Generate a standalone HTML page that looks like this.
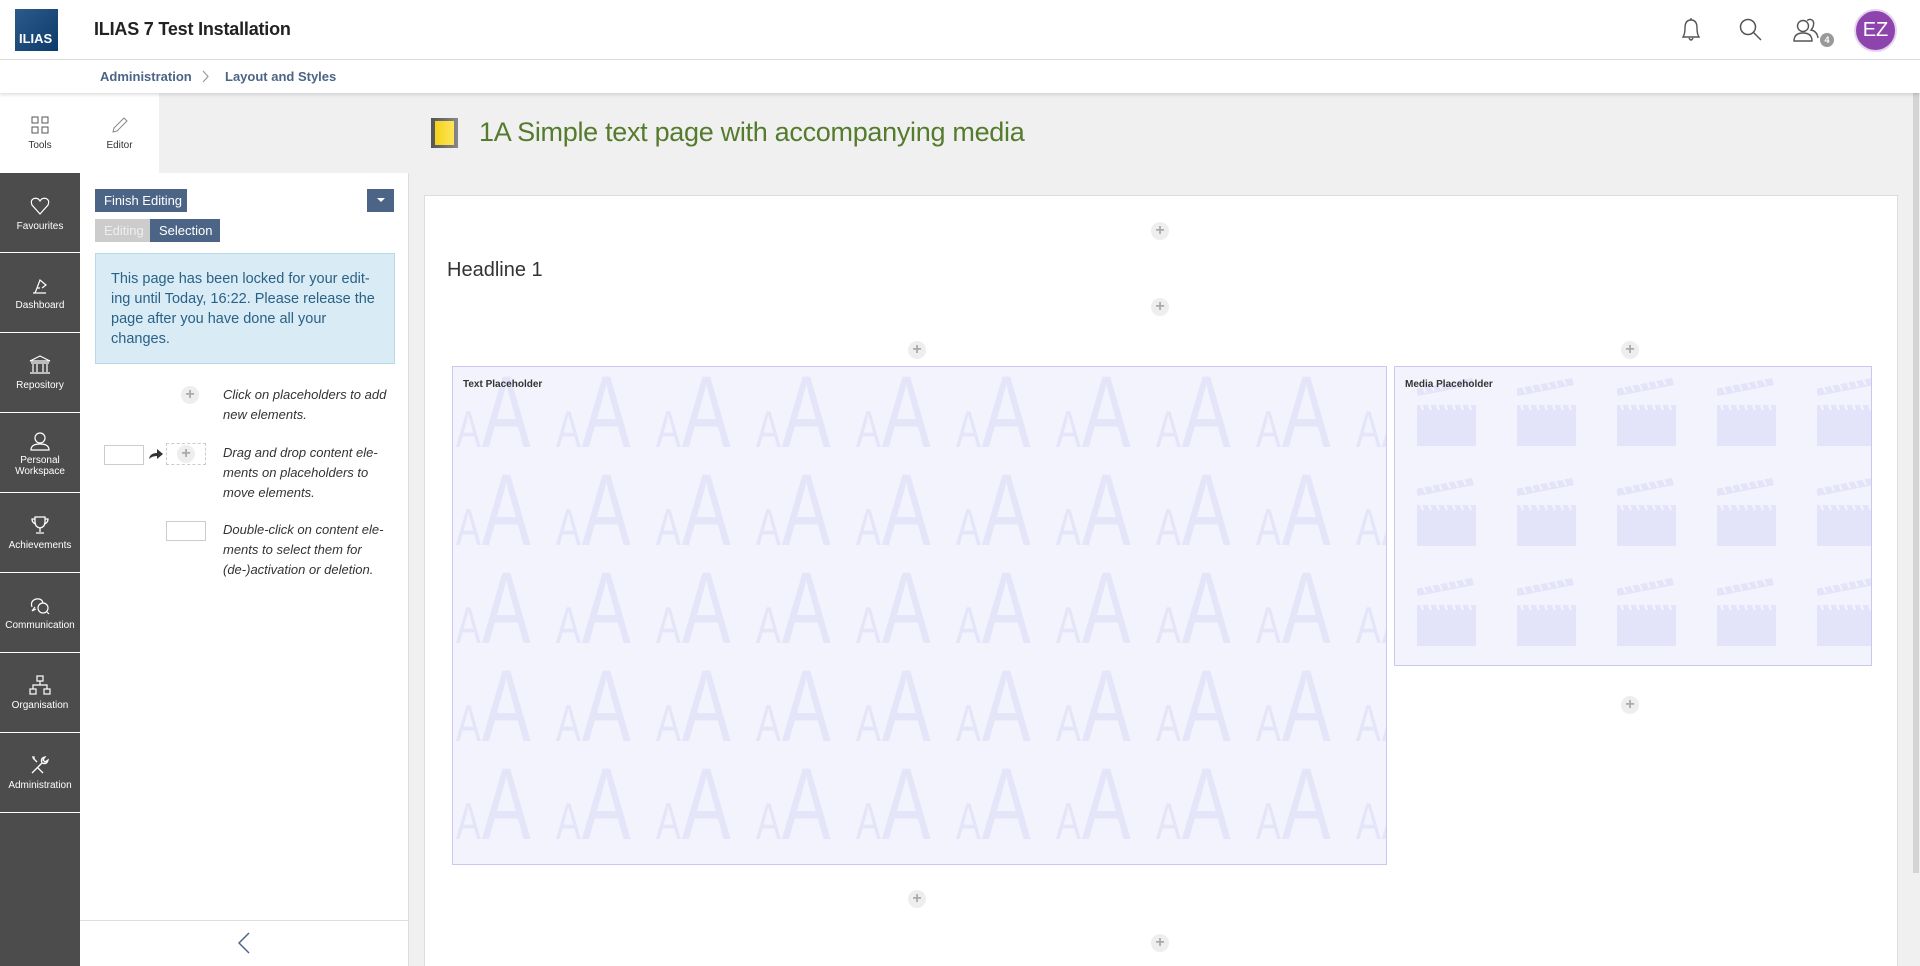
<!DOCTYPE html>
<html style="overflow:hidden;height:966px"><head><meta charset="utf-8"><style>
*{box-sizing:border-box;margin:0;padding:0}
body{width:1920px;height:966px;overflow:hidden;font-family:"Liberation Sans",sans-serif;background:#fff;position:relative;color:#161616}
.abs{position:absolute}
#hdr{left:0;top:0;width:1920px;height:60px;background:#fff;border-bottom:1px solid #ddd}
#bc{left:0;top:60px;width:1920px;height:33px;background:#fff;box-shadow:0 2px 3px rgba(0,0,0,.12);z-index:2}
#bc span{position:absolute;top:9px;font-size:13px;color:#4c6586;font-weight:bold}
#slate{left:0;top:93px;width:80px;height:873px;background:#4c4c4c}
.si{position:absolute;left:0;width:80px;height:80px;border-bottom:1px solid #fff;color:#fff;font-size:10px;text-align:center}
.si svg{display:block;margin:0 auto}
#panel{left:80px;top:93px;width:329px;height:873px;background:#fff;border-right:1px solid #ddd}
#main{left:409px;top:93px;width:1503px;height:873px;background:#f0f0f0;overflow:hidden}
.plus{position:absolute;width:18px;height:18px;border-radius:9px;background:#eee;color:#aaa;font-weight:bold;font-size:16px;line-height:18px;text-align:center}
.help{position:absolute;left:143px;font-style:italic;font-size:13px;line-height:20px;color:#333;width:170px}
</style></head><body>
<div id="hdr" class="abs">
  <div class="abs" style="left:15px;top:9px;width:43px;height:42px;background:linear-gradient(135deg,#2c5a8a,#0d3b6a);color:#fff;font-weight:bold;font-size:13px;padding:22px 0 0 4px">ILIAS</div>
  <div class="abs" style="left:94px;top:19px;font-size:18px;color:#222;font-weight:bold;letter-spacing:-.2px">ILIAS 7 Test Installation</div>
  <svg class="abs" style="left:1679px;top:16px" width="24" height="28" viewBox="0 0 24 28" fill="none" stroke="#555" stroke-width="1.4"><path d="M4 21 Q6 18 6 12 Q6 4 12 4 Q18 4 18 12 Q18 18 20 21 Z"/><path d="M10 22 Q12 26 14 22"/><path d="M12 2v2"/></svg>
  <svg class="abs" style="left:1738px;top:16px" width="26" height="28" viewBox="0 0 26 28" fill="none" stroke="#555" stroke-width="1.5"><circle cx="10" cy="11" r="7.5"/><path d="M15.5 16.5 L23 24"/></svg>
  <svg class="abs" style="left:1792px;top:16px" width="30" height="28" viewBox="0 0 30 28" fill="none" stroke="#555" stroke-width="1.4"><circle cx="11" cy="10" r="5.5"/><path d="M2 25 Q2 17 11 17 Q20 17 20 25 Z"/><path d="M15 4.5 Q17 3 19 3.5 Q23 5 21 11 Q20 13 19 14 Q25 15 26 22"/></svg>
  <div class="abs" style="left:1820px;top:33px;width:14px;height:14px;border-radius:7px;background:#999;color:#fff;font-size:9px;font-weight:bold;text-align:center;line-height:14px">4</div>
  <div class="abs" style="left:1854px;top:9px;width:43px;height:43px;border-radius:22px;background:#8e44ad;border:2px solid #e6d2ee;color:#fff;font-size:20px;text-align:center;line-height:39px">EZ</div>
</div>
<div id="bc" class="abs">
  <span style="left:100px">Administration</span>
  <svg class="abs" style="left:202px;top:10px" width="8" height="13"><path d="M1 1l5 5.5-5 5.5" fill="none" stroke="#999" stroke-width="1.2"/></svg>
  <span style="left:225px">Layout and Styles</span>
</div>
<div id="slate" class="abs">
  <div class="si" style="top:0;background:#fff;color:#333;height:80px;border:none"><svg style="margin-top:23px" width="18" height="18" fill="none" stroke="#555"><rect x="1" y="1" width="6" height="6"/><rect x="11" y="1" width="6" height="6"/><rect x="1" y="11" width="6" height="6"/><rect x="11" y="11" width="6" height="6"/></svg><div style="margin-top:6px">Tools</div></div>
  <div class="si" style="top:80px"><svg style="margin-top:24px" width="20" height="18" fill="none" stroke="#fff" stroke-width="1.2"><path d="M10 17 L2 8 Q0 3 4 1.5 Q8 0.5 10 4 Q12 0.5 16 1.5 Q20 3 18 8 Z"/></svg><div style="margin-top:6px">Favourites</div></div>
  <div class="si" style="top:160px"><svg style="margin-top:22px" width="20" height="20" fill="none" stroke="#fff" stroke-width="1.2"><path d="M3 18h13M5 18l2-5 3 0M7 13l3-8 6 5-4 3"/></svg><div style="margin-top:5px">Dashboard</div></div>
  <div class="si" style="top:240px"><svg style="margin-top:22px" width="22" height="20" fill="none" stroke="#fff" stroke-width="1.2"><path d="M1 6L11 1l10 5zM2 8h18M4 9v8M8 9v8M14 9v8M18 9v8M1 18h20"/></svg><div style="margin-top:5px">Repository</div></div>
  <div class="si" style="top:320px"><svg style="margin-top:18px" width="20" height="20" fill="none" stroke="#fff" stroke-width="1.2"><circle cx="10" cy="7" r="5"/><path d="M1 19Q1 13 10 13Q19 13 19 19Z"/></svg><div style="margin-top:4px;line-height:11px">Personal<br>Workspace</div></div>
  <div class="si" style="top:400px"><svg style="margin-top:22px" width="20" height="20" fill="none" stroke="#fff" stroke-width="1.3"><path d="M5 2h10v5q0 5-5 6q-5-1-5-6zM5 4H2q0 4 4 5M15 4h3q0 4-4 5M10 13v4M6 18h8"/></svg><div style="margin-top:5px">Achievements</div></div>
  <div class="si" style="top:480px"><svg style="margin-top:22px" width="22" height="20" fill="none" stroke="#fff" stroke-width="1.2"><path d="M3 12Q1 6 7 4Q13 3 14 8M6 12l-3 4 4-2"/><circle cx="14" cy="13" r="5"/><path d="M18 17l2 2"/></svg><div style="margin-top:5px">Communication</div></div>
  <div class="si" style="top:560px"><svg style="margin-top:22px" width="22" height="20" fill="none" stroke="#fff" stroke-width="1.2"><rect x="8" y="1" width="6" height="5"/><rect x="1" y="14" width="6" height="5"/><rect x="15" y="14" width="6" height="5"/><path d="M11 6v4M4 14v-4h14v4"/></svg><div style="margin-top:5px">Organisation</div></div>
  <div class="si" style="top:640px"><svg style="margin-top:22px" width="20" height="20" fill="none" stroke="#fff" stroke-width="1.3"><path d="M2 18L12 8M12 8q-2-5 3-6l-2 3 2 2 3-2q-1 5-6 3M3 3l4 4M2 2l2 0 0 2M8 13l5 5"/></svg><div style="margin-top:5px">Administration</div></div>
</div>
<div id="panel" class="abs">
  <div class="abs" style="left:0;top:0;width:329px;height:80px;background:#f0f0f0"></div>
  <div class="abs" style="left:0;top:0;width:79px;height:80px;background:#fff;text-align:center;font-size:10px;color:#333">
    <svg style="display:block;margin:23px auto 0" width="18" height="18" fill="none" stroke="#888"><path d="M2 16l1-4L13 2l3 3L6 15z"/></svg><div style="margin-top:6px">Editor</div></div>
  <div class="abs" style="left:15px;top:96px;width:92px;height:23px;background:#4c6586;color:#fff;font-size:13px;line-height:23px;padding-left:9px">Finish Editing</div>
  <div class="abs" style="left:287px;top:96px;width:27px;height:23px;background:#4c6586"><svg style="margin:9px 0 0 10px;display:block" width="8" height="5"><path d="M0 0h8L4 4z" fill="#fff"/></svg></div>
  <div class="abs" style="left:15px;top:126px;width:55px;height:23px;background:#ccc;color:#eee;font-size:13px;line-height:23px;padding-left:9px">Editing</div>
  <div class="abs" style="left:70px;top:126px;width:70px;height:23px;background:#4c6586;color:#fff;font-size:13px;line-height:23px;padding-left:9px">Selection</div>
  <div class="abs" style="left:15px;top:160px;width:300px;height:111px;background:#d9ecf5;border:1px solid #b5d8ea;color:#2a6186;font-size:14.5px;line-height:20px;padding:15px 12px 0 15px">This page has been locked for your edit-ing until Today, 16:22. Please release the page after you have done all your changes.</div>
  <div class="plus" style="left:101px;top:293px">+</div>
  <div class="help" style="top:292px">Click on placeholders to add new elements.</div>
  <div class="abs" style="left:24px;top:352px;width:40px;height:20px;border:1px solid #ccc"></div>
  <svg class="abs" style="left:68px;top:355px" width="16" height="12"><path d="M1 11Q2 5 9 5V1l6 5-6 5V8Q4 8 1 11z" fill="#333"/></svg>
  <div class="abs" style="left:86px;top:350px;width:40px;height:22px;border:1px dashed #ccc"><div class="plus" style="left:10px;top:1px">+</div></div>
  <div class="help" style="top:350px">Drag and drop content ele-ments on placeholders to move elements.</div>
  <div class="abs" style="left:86px;top:428px;width:40px;height:20px;border:1px solid #ccc"></div>
  <div class="help" style="top:427px">Double-click on content ele-ments to select them for (de-)activation or deletion.</div>
  <div class="abs" style="left:0;top:827px;width:328px;height:1px;background:#ddd"></div>
  <svg class="abs" style="left:158px;top:839px" width="12" height="22"><path d="M11 1L1 11l10 10" fill="none" stroke="#4c6586" stroke-width="1.5"/></svg>
</div>
<div id="main" class="abs">
  <div class="abs" style="left:22px;top:25px;width:27px;height:30px;background:linear-gradient(90deg,#555,#888);padding:3px 4px"><div style="width:19px;height:24px;background:linear-gradient(90deg,#f5d21c,#ffe55a)"></div></div>
  <div class="abs" style="left:70px;top:24px;font-size:27px;color:#557b2c;letter-spacing:-.3px">1A Simple text page with accompanying media</div>
  <div class="abs" style="left:15px;top:102px;width:1474px;height:771px;background:#fff;border:1px solid #ddd;border-bottom:none">
    <div class="plus" style="left:726px;top:26px">+</div>
    <div class="abs" style="left:22px;top:63px;font-size:20px;color:#333">Headline 1</div>
    <div class="plus" style="left:726px;top:102px">+</div>
    <div class="plus" style="left:483px;top:145px">+</div>
    <div class="plus" style="left:1196px;top:145px">+</div>
    <div class="abs" style="left:27px;top:170px;width:935px;height:499px;background:#f3f3fd;border:1px solid #c8c8f2;overflow:hidden">
      <svg class="abs" style="left:0;top:0" width="935" height="499"><defs><pattern id="pa" x="0" y="0" width="100" height="98" patternUnits="userSpaceOnUse"><g transform="scale(0.72,1)"><text x="4" y="80" font-family="Liberation Sans,sans-serif" font-size="52" fill="#e5e5f9">A</text><text x="40" y="80" font-family="Liberation Sans,sans-serif" font-size="102" fill="#e5e5f9">A</text></g></pattern></defs><rect width="935" height="499" fill="url(#pa)"/></svg>
      <div class="abs" style="left:10px;top:12px;font-size:10px;font-weight:bold;color:#333">Text Placeholder</div>
    </div>
    <div class="abs" style="left:969px;top:170px;width:478px;height:300px;background:#f3f3fd;border:1px solid #c8c8f2;overflow:hidden">
      <svg class="abs" style="left:0;top:0" width="478" height="300"><defs><pattern id="pm" x="22" y="10" width="100" height="100" patternUnits="userSpaceOnUse"><rect x="0" y="28" width="59" height="41" fill="#e3e3f9"/><path d="M4 28l2 5M12 28l2 5M20 28l2 5M28 28l2 5M36 28l2 5M44 28l2 5M52 28l2 5" stroke="#f3f3fd" stroke-width="2.5"/><path d="M-2 12L55 1l2 7-56 11z" fill="#e3e3f9"/><path d="M6 10l3 6M14 8l3 6M22 7l3 6M30 5l3 6M38 4l3 6M46 2l3 6" stroke="#f3f3fd" stroke-width="2"/></pattern></defs><rect width="478" height="300" fill="url(#pm)"/></svg>
      <div class="abs" style="left:10px;top:12px;font-size:10px;font-weight:bold;color:#333">Media Placeholder</div>
    </div>
    <div class="plus" style="left:1196px;top:500px">+</div>
    <div class="plus" style="left:483px;top:694px">+</div>
    <div class="plus" style="left:726px;top:738px">+</div>
  </div>
</div>
<div class="abs" style="left:1912px;top:93px;width:8px;height:873px;background:#f0f0f0"><div style="margin:0 1px;width:6px;height:780px;background:#d4d4d4"></div></div>
</body></html>
